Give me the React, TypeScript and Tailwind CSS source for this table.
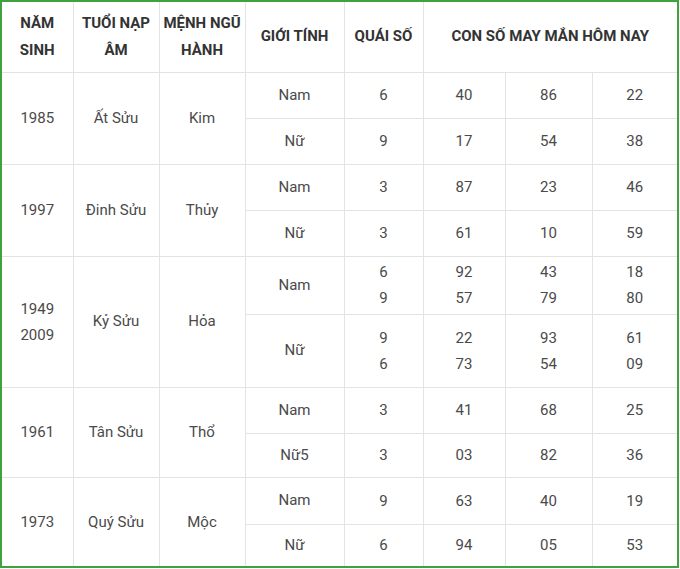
import React from 'react'

type Sub = { sex: string; quai: string[]; nums: string[][]; h: string }
type Group = { year: string[]; tuoi: string; menh: string; rows: Sub[] }

const groups: Group[] = [
  {
    year: ['1985'], tuoi: 'Ất Sửu', menh: 'Kim',
    rows: [
      { sex: 'Nam', quai: ['6'], nums: [['40'], ['86'], ['22']], h: 'h-[46px]' },
      { sex: 'Nữ', quai: ['9'], nums: [['17'], ['54'], ['38']], h: 'h-[46px]' },
    ],
  },
  {
    year: ['1997'], tuoi: 'Đinh Sửu', menh: 'Thủy',
    rows: [
      { sex: 'Nam', quai: ['3'], nums: [['87'], ['23'], ['46']], h: 'h-[46px]' },
      { sex: 'Nữ', quai: ['3'], nums: [['61'], ['10'], ['59']], h: 'h-[46px]' },
    ],
  },
  {
    year: ['1949', '2009'], tuoi: 'Kỷ Sửu', menh: 'Hỏa',
    rows: [
      { sex: 'Nam', quai: ['6', '9'], nums: [['92', '57'], ['43', '79'], ['18', '80']], h: 'h-[58px]' },
      { sex: 'Nữ', quai: ['9', '6'], nums: [['22', '73'], ['93', '54'], ['61', '09']], h: 'h-[73px]' },
    ],
  },
  {
    year: ['1961'], tuoi: 'Tân Sửu', menh: 'Thổ',
    rows: [
      { sex: 'Nam', quai: ['3'], nums: [['41'], ['68'], ['25']], h: 'h-[46px]' },
      { sex: 'Nữ5', quai: ['3'], nums: [['03'], ['82'], ['36']], h: 'h-[44px]' },
    ],
  },
  {
    year: ['1973'], tuoi: 'Quý Sửu', menh: 'Mộc',
    rows: [
      { sex: 'Nam', quai: ['9'], nums: [['63'], ['40'], ['19']], h: 'h-[47px]' },
      { sex: 'Nữ', quai: ['6'], nums: [['94'], ['05'], ['53']], h: 'h-[42px]' },
    ],
  },
]

const cell = 'border border-[#e3e3e3] text-center align-middle p-0'

function Lines({ items }: { items: string[] }) {
  return (
    <div className="flex flex-col items-center">
      {items.map((t, i) => (
        <span key={i} className="leading-[26px]">{t}</span>
      ))}
    </div>
  )
}

export default function App() {
  return (
    <div className="w-[680px] h-[569px] bg-white">
      <div className="w-[679px] h-[568px] border-2 border-[#3ea23e] overflow-hidden">
        <table
          className="w-[675px] table-fixed border-collapse border-hidden text-[15px] text-[#4a4a4a]"
          style={{ fontFamily: 'Roboto, "Liberation Sans", sans-serif' }}
        >
          <colgroup>
            <col className="w-[71px]" />
            <col className="w-[86px]" />
            <col className="w-[86px]" />
            <col className="w-[99px]" />
            <col className="w-[79px]" />
            <col className="w-[82px]" />
            <col className="w-[87px]" />
            <col className="w-[85px]" />
          </colgroup>
          <thead>
            <tr className="h-[70px] font-bold text-[#333] leading-[27px]">
              <th className={cell}>NĂM<br />SINH</th>
              <th className={cell}>TUỔI NẠP<br />ÂM</th>
              <th className={cell}>MỆNH NGŨ<br />HÀNH</th>
              <th className={cell}>GIỚI TÍNH</th>
              <th className={cell}>QUÁI SỐ</th>
              <th className={cell} colSpan={3}>CON SỐ MAY MẮN HÔM NAY</th>
            </tr>
          </thead>
          <tbody>
            {groups.map((g) =>
              g.rows.map((r, ri) => (
                <tr key={g.tuoi + ri} className={r.h}>
                  {ri === 0 && (
                    <>
                      <td className={cell} rowSpan={2}><Lines items={g.year} /></td>
                      <td className={cell} rowSpan={2}>{g.tuoi}</td>
                      <td className={cell} rowSpan={2}>{g.menh}</td>
                    </>
                  )}
                  <td className={cell}>{r.sex}</td>
                  <td className={cell}><Lines items={r.quai} /></td>
                  {r.nums.map((n, ni) => (
                    <td key={ni} className={cell}><Lines items={n} /></td>
                  ))}
                </tr>
              ))
            )}
          </tbody>
        </table>
      </div>
    </div>
  )
}
